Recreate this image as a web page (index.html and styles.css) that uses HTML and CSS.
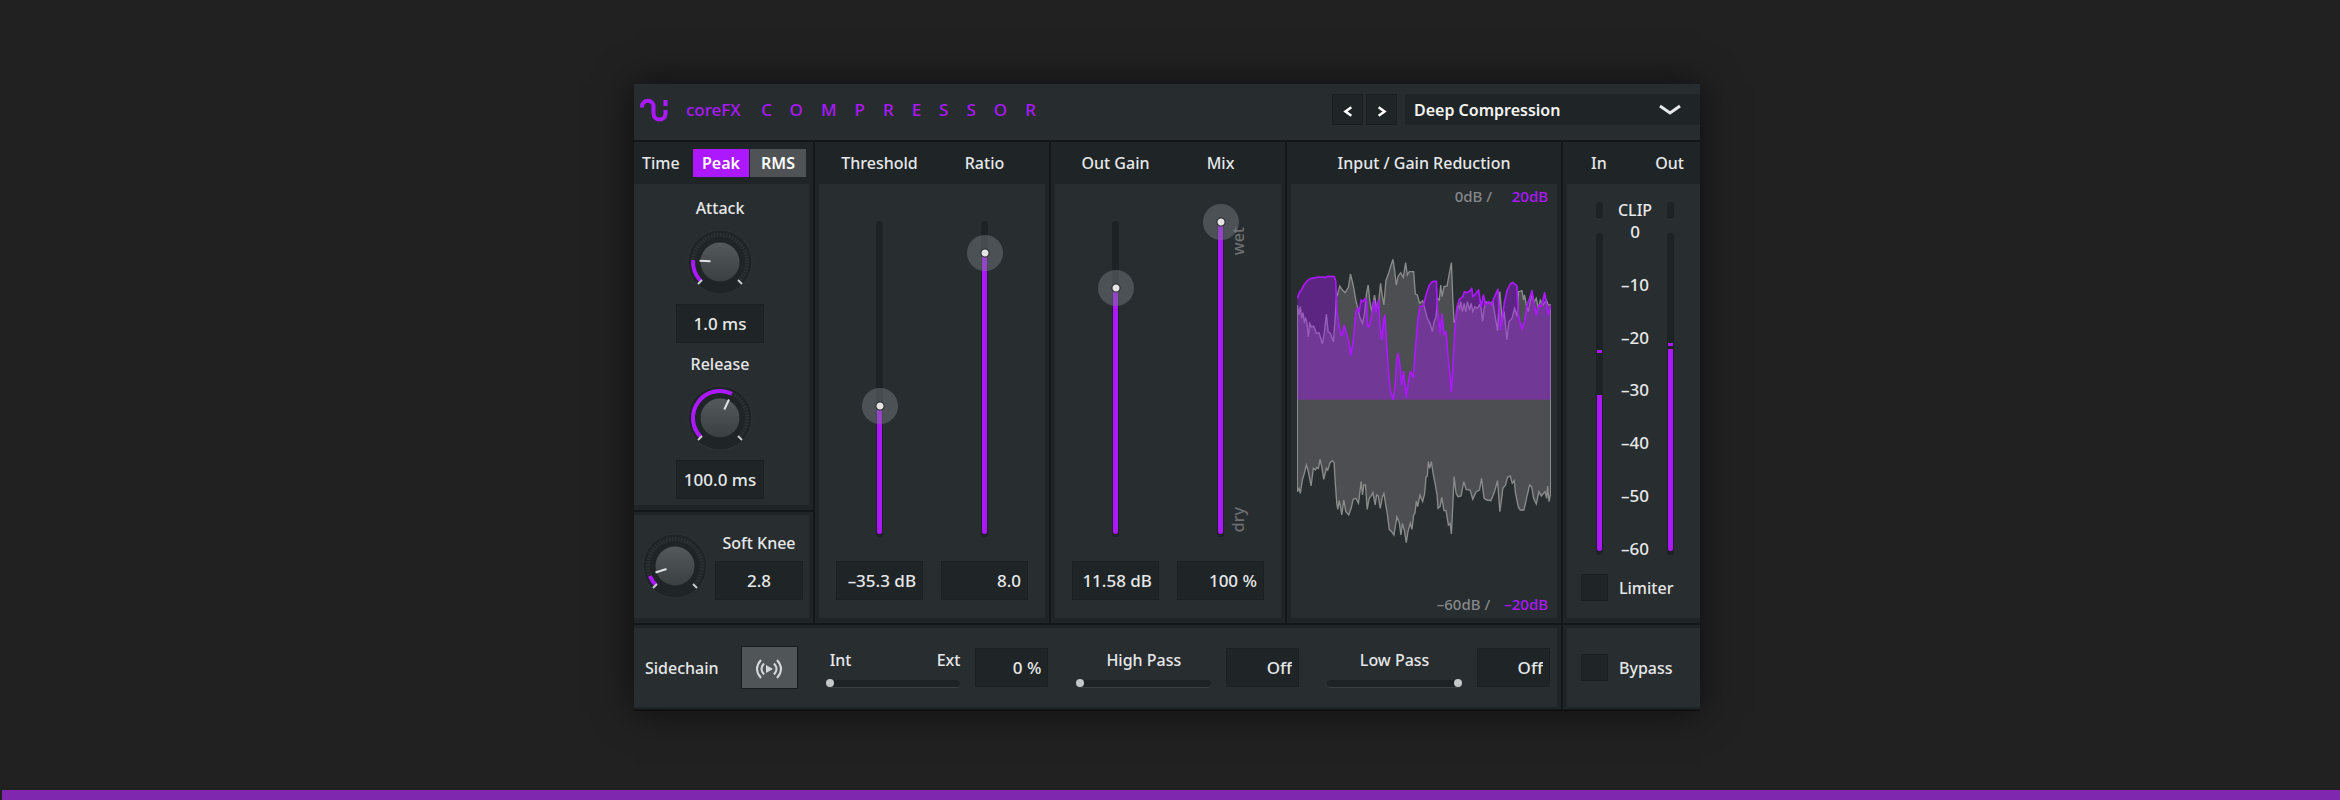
FILE: index.html
```html
<!DOCTYPE html>
<html lang="en">
<head>
    <meta charset="UTF-8">
    <meta name="viewport" content="width=device-width, initial-scale=1.0">
    <title>coreFX Compressor</title>
    <link rel="stylesheet" href="styles.css">
</head>
<body>
    <main class="stage">
        <div class="plugin">
            <header class="header">
                <svg class="logo" viewBox="0 0 28 24" fill="none" stroke="currentColor" stroke-width="4">
                    <path d="M2 9.500V8.500a5.500 5.500 0 0 1 11.500 0V15.500a6 6 0 0 0 12 0V12"/>
                    <path d="M25.500 2v6"/>
                </svg>
                <h1 class="brand">coreFX <span class="brand-name">COMPRESSOR</span></h1>
                <div class="presets">
                    <button class="step" aria-label="Previous preset">
                        <svg viewBox="0 0 12 14" fill="none" stroke="currentColor" stroke-width="3"><path d="M10 2L3 7l7 5"/></svg>
                    </button>
                    <button class="step" aria-label="Next preset">
                        <svg viewBox="0 0 12 14" fill="none" stroke="currentColor" stroke-width="3"><path d="M2 2l7 5-7 5"/></svg>
                    </button>
                    <div class="preset">
                        <select aria-label="Preset">
                            <option>Deep Compression</option>
                        </select>
                        <svg viewBox="0 0 24 12" fill="none" stroke="currentColor" stroke-width="3"><path d="M2 2l10 7 10-7"/></svg>
                    </div>
                </div>
            </header>

            <div class="panels">
                <div class="column">
                    <section class="panel panel-time">
                        <div class="title title-time">
                            <span>Time</span>
                            <div class="toggle">
                                <button class="active" aria-pressed="true">Peak</button>
                                <button aria-pressed="false">RMS</button>
                            </div>
                        </div>
                        <div class="body body-time">
                            <label for="attack">Attack</label>
                            <svg class="knob" viewBox="-33 -33 66 66">
                                <circle class="knob-base" r="32"/>
                                <path class="knob-ring" d="M-19.100 19.100A27 27 0 1 1 19.100 19.100"/>
                                <path class="knob-value" d="M-19.100 19.100A27 27 0 0 1 -26.900 -2"/>
                                <circle class="knob-cap" r="19.500"/>
                                <path class="knob-mark" d="M-22 22l4-4M22 22l-4-4"/>
                                <path class="knob-pointer" d="M-20.500 -1.300L-9.500 -.700"/>
                            </svg>
                            <input class="value" id="attack" type="text" value="1.0 ms">
                            <label for="release">Release</label>
                            <svg class="knob" viewBox="-33 -33 66 66">
                                <circle class="knob-base" r="32"/>
                                <path class="knob-ring" d="M-19.100 19.100A27 27 0 1 1 19.100 19.100"/>
                                <path class="knob-value" d="M-19.100 19.100A27 27 0 0 1 11.800 -24.300"/>
                                <circle class="knob-cap" r="19.500"/>
                                <path class="knob-mark" d="M-22 22l4-4M22 22l-4-4"/>
                                <path class="knob-pointer" d="M9 -18.500L4.300 -8.500"/>
                            </svg>
                            <input class="value" id="release" type="text" value="100.0 ms">
                        </div>
                    </section>
                    <section class="panel panel-knee">
                        <div class="body body-knee">
                            <svg class="knob" viewBox="-33 -33 66 66">
                                <circle class="knob-base" r="32"/>
                                <path class="knob-ring" d="M-19.100 19.100A27 27 0 1 1 19.100 19.100"/>
                                <path class="knob-value" d="M-19.100 19.100A27 27 0 0 1 -25.100 10"/>
                                <circle class="knob-cap" r="19.500"/>
                                <path class="knob-mark" d="M-22 22l4-4M22 22l-4-4"/>
                                <path class="knob-pointer" d="M-19.500 6.500L-8.500 3"/>
                            </svg>
                            <div class="knee">
                                <label for="knee">Soft Knee</label>
                                <input class="value" id="knee" type="text" value="2.8">
                            </div>
                        </div>
                    </section>
                </div>

                <section class="panel">
                    <div class="title title-pair"><label for="threshold">Threshold</label><label for="ratio">Ratio</label></div>
                    <div class="body body-faders">
                        <div class="fader" style="--v: 0.414"><input id="threshold" type="range" min="0" max="1" step="0.001" value="0.414"></div>
                        <div class="fader" style="--v: 0.9"><input id="ratio" type="range" min="0" max="1" step="0.001" value="0.9"></div>
                        <input class="value right" type="text" value="&#8211;35.3 dB" aria-label="Threshold value">
                        <input class="value right" type="text" value="8.0" aria-label="Ratio value">
                    </div>
                </section>

                <section class="panel">
                    <div class="title title-pair"><label for="gain">Out Gain</label><label for="mix">Mix</label></div>
                    <div class="body body-faders">
                        <div class="fader" style="--v: 0.789"><input id="gain" type="range" min="0" max="1" step="0.001" value="0.789"></div>
                        <div class="fader" style="--v: 1">
                            <input id="mix" type="range" min="0" max="1" step="0.001" value="1">
                            <span class="wet">wet</span>
                            <span class="dry">dry</span>
                        </div>
                        <input class="value right" type="text" value="11.58 dB" aria-label="Out gain value">
                        <input class="value right" type="text" value="100 %" aria-label="Mix value">
                    </div>
                </section>

                <section class="panel">
                    <div class="title">Input / Gain Reduction</div>
                    <div class="body body-graph">
                        <div class="range"><span>0dB /</span><span class="accent">20dB</span></div>
                        <svg class="graph" viewBox="54 0 760 960" preserveAspectRatio="none">
                            <!-- input level -->
                            <path class="input-area" d="M55 195L60 225 64 200 68 235 72 218 76 245 80 235 84 250 88 290 92 250 98 262 104 258 112 280 120 278 130 312 136 275 142 222 147 275 154 280 163 305 168 235 172 170 175 165 182 138 190 150 198 158 208 142 214 102 222 135 230 180 236 205 243 235 250 250 256 220 262 160 267 135 272 185 278 215 286 165 292 205 298 190 304 130 308 160 314 195 320 122 328 100 334 80 341 58 346 90 351 135 356 110 364 98 372 112 379 68 384 105 390 95 403 95 408 162 414 165 421 190 430 182 436 205 444 235 452 250 459 275 464 245 470 230 475 175 480 180 484 135 488 170 494 140 503 138 508 110 516 68 520 170 524 248 530 235 535 190 540 205 544 185 549 215 554 190 559 215 564 185 570 210 575 190 580 215 586 200 594 205 600 195 605 205 609 245 614 205 620 185 628 190 640 185 647 230 654 272 661 155 668 245 674 215 682 300 688 245 697 235 705 205 713 230 717 155 727 152 732 180 735 165 740 195 746 215 751 190 757 165 764 185 770 175 776 205 782 180 790 195 800 180 806 195 813 195V760L808 785 804 738 801 775 796 755 785 768 778 755 770 792 762 775 756 740 750 735 742 770 733 810 722 810 716 800 708 760 704 722 698 730 692 708 684 712 678 735 670 745 667 770 661 815 654 722 645 755 634 782 622 780 614 775 606 715 600 750 590 755 580 778 572 750 560 748 553 725 545 768 536 770 530 760 524 710 520 800 516 882 512 850 507 855 500 812 494 812 487 772 482 800 476 805 473 765 468 735 462 705 456 665 451 685 447 665 444 708 440 712 436 760 430 785 422 765 415 800 411 783 407 820 403 825 398 868 393 850 386 875 381 908 375 870 369 850 365 885 360 848 353 830 344 885 337 875 330 868 324 820 318 785 314 760 309 772 303 805 297 768 292 765 288 795 281 758 276 768 270 775 264 808 259 735 254 735 250 765 246 725 238 790 230 775 222 778 216 805 209 825 200 815 194 780 188 825 184 800 180 782 176 808 173 790 168 720 165 668 160 662 153 668 146 690 142 685 134 718 128 680 123 658 118 685 113 682 109 690 103 685 96 738 88 695 82 675 76 700 70 720 64 760 60 745 55 755Z"/>
                            <!-- gain reduction -->
                            <path class="reduction-area" d="M55 479V175L60 160 67 150 75 135 85 122 97 115 120 111 140 112 147 109 166 110 170 125 173 210 180 260 186 285 190 285 195 255 202 280 208 300 215 345 222 305 230 215 236 205 240 215 246 180 252 185 258 175 262 185 265 258 270 260 278 225 284 182 290 215 298 180 303 270 308 298 313 240 317 225 322 310 328 400 334 455 342 478 348 430 352 360 356 340 362 375 367 435 373 395 381 470 386 435 393 395 402 412 408 330 416 235 422 200 432 198 440 165 450 135 460 124 471 124 474 205 482 278 488 222 494 285 500 275 506 350 512 410 516 455 520 390 526 270 532 205 540 178 550 170 555 155 562 158 572 152 577 145 580 170 586 165 597 150 605 200 612 165 618 195 628 185 636 195 643 175 655 148 660 225 663 268 668 235 675 185 683 150 692 132 699 127 712 137 716 225 727 268 735 245 742 195 750 175 757 152 764 195 770 225 778 195 784 200 790 180 795 158 800 190 806 225 813 195V479Z"/>
                            <path class="reduction-line" d="M55 175L60 160 67 150 75 135 85 122 97 115 120 111 140 112 147 109 166 110 170 125 173 210 180 260 186 285 190 285 195 255 202 280 208 300 215 345 222 305 230 215 236 205 240 215 246 180 252 185 258 175 262 185 265 258 270 260 278 225 284 182 290 215 298 180 303 270 308 298 313 240 317 225 322 310 328 400 334 455 342 478 348 430 352 360 356 340 362 375 367 435 373 395 381 470 386 435 393 395 402 412 408 330 416 235 422 200 432 198 440 165 450 135 460 124 471 124 474 205 482 278 488 222 494 285 500 275 506 350 512 410 516 455 520 390 526 270 532 205 540 178 550 170 555 155 562 158 572 152 577 145 580 170 586 165 597 150 605 200 612 165 618 195 628 185 636 195 643 175 655 148 660 225 663 268 668 235 675 185 683 150 692 132 699 127 712 137 716 225 727 268 735 245 742 195 750 175 757 152 764 195 770 225 778 195 784 200 790 180 795 158 800 190 806 225 813 195"/>
                        </svg>
                        <div class="range"><span>&#8211;60dB /</span><span class="accent">&#8211;20dB</span></div>
                    </div>
                </section>

                <section class="panel panel-last">
                    <div class="title title-meters"><span>In</span><span>Out</span></div>
                    <div class="body body-meters">
                        <div class="meters">
                            <div class="meter">
                                <i class="clip"></i>
                                <div class="bar"><i class="peak"></i><i class="level" style="height: 156px"></i></div>
                            </div>
                            <div class="scale">
                                <span>CLIP</span>
                                <ol>
                                    <li>0</li>
                                    <li>&#8211;10</li>
                                    <li>&#8211;20</li>
                                    <li>&#8211;30</li>
                                    <li>&#8211;40</li>
                                    <li>&#8211;50</li>
                                    <li>&#8211;60</li>
                                </ol>
                            </div>
                            <div class="meter">
                                <i class="clip"></i>
                                <div class="bar bar-out"><i class="peak"></i><i class="level" style="height: 202px"></i></div>
                            </div>
                        </div>
                        <label class="check"><input type="checkbox">Limiter</label>
                    </div>
                </section>
            </div>

            <div class="bottom">
                <section class="panel panel-side">
                    <div class="body body-side">
                        <span>Sidechain</span>
                        <button class="listen" aria-label="Listen to sidechain">
                            <svg viewBox="0 0 28 20" fill="none" stroke="currentColor" stroke-width="2">
                                <path d="M6 1Q-2 10 6 19M22 1Q30 10 22 19"/>
                                <path d="M9 4.500Q4 10 9 15.500M19 4.500Q24 10 19 15.500"/>
                                <path d="M11 6v8l7-4z" fill="currentColor" stroke="none"/>
                            </svg>
                        </button>
                        <div class="filters">
                            <div class="filter">
                                <div class="filter-main">
                                    <label class="ends" for="source"><span>Int</span><span>Ext</span></label>
                                    <input class="line" id="source" type="range" value="0">
                                </div>
                                <input class="value right" type="text" value="0 %" aria-label="Sidechain amount">
                            </div>
                            <div class="filter">
                                <div class="filter-main">
                                    <label for="highpass">High Pass</label>
                                    <input class="line" id="highpass" type="range" value="0">
                                </div>
                                <input class="value right" type="text" value="Off" aria-label="High pass value">
                            </div>
                            <div class="filter">
                                <div class="filter-main">
                                    <label for="lowpass">Low Pass</label>
                                    <input class="line" id="lowpass" type="range" value="100">
                                </div>
                                <input class="value right" type="text" value="Off" aria-label="Low pass value">
                            </div>
                        </div>
                    </div>
                </section>
                <section class="panel panel-last panel-bypass">
                    <div class="body body-bypass">
                        <label class="check"><input type="checkbox">Bypass</label>
                    </div>
                </section>
            </div>
        </div>
    </main>
    <svg width="0" height="0" aria-hidden="true">
        <linearGradient id="cap" x2="0" y2="1">
            <stop offset="0" stop-color="#54595c"/>
            <stop offset="1" stop-color="#3a3f42"/>
        </linearGradient>
    </svg>
    <footer class="footer"></footer>
</body>
</html>
```
FILE: styles.css
```css
:root {
    --accent: #ac18ff;
    --strip: #1f2427;
    --body: #282d30;
    --edge: #13171a;
    --text: #e6e8e9;
}
* {
    box-sizing: border-box;
}
body {
    margin: 0;
    min-height: 100vh;
    display: flex;
    flex-direction: column;
    background: #212121;
    color: var(--text);
    font-family: "Noto Sans", "Open Sans", sans-serif;
    font-size: 16px;
    font-weight: 500;
    line-height: 24px;
}
button, input, select {
    font: inherit;
    color: inherit;
    margin: 0;
    border: none;
    border-radius: 0;
}
button {
    padding: 0;
    cursor: pointer;
}
.stage {
    padding: 84px 6px 40px 0;
}
.plugin {
    max-width: 1066px;
    margin: 0 auto;
    background: var(--strip);
    border-bottom: 1px solid #0c0f10;
    box-shadow: 0 0 36px rgba(0, 0, 0, 0.6);
}
.header {
    display: flex;
    align-items: center;
    min-height: 58px;
    padding-bottom: 5px;
    background: #272c2f;
    border-bottom: 2px solid var(--edge);
}
.logo {
    width: 28px;
    height: 24px;
    margin-left: 6px;
    color: var(--accent);
}
.brand {
    margin: 0 0 0 18px;
    font-size: 17px;
    font-weight: 500;
    color: var(--accent);
}
.brand-name {
    margin-left: 16px;
    letter-spacing: 18px;
}
.presets {
    display: flex;
    gap: 3px;
    margin-left: auto;
}
.step {
    width: 31px;
    height: 31px;
    background: var(--strip);
    box-shadow: inset 0 0 0 1px #1a1e21;
    color: #fff;
}
.step svg {
    width: 10px;
    height: 13px;
    vertical-align: middle;
}
.preset {
    display: grid;
    align-items: center;
    width: 295px;
    margin-left: 5px;
}
.preset select, .preset svg {
    grid-area: 1 / 1;
}
.preset select {
    appearance: none;
    height: 31px;
    padding: 0 36px 0 9px;
    background: var(--strip);
    border-radius: 3px;
    color: #f4f4f4;
    font-weight: 600;
}
.preset svg {
    width: 24px;
    height: 12px;
    justify-self: end;
    margin-right: 18px;
    pointer-events: none;
}
.panels {
    display: grid;
    grid-template-columns: 181fr 236fr 236fr 276fr 137fr;
}
.bottom {
    display: grid;
    grid-template-columns: 929fr 137fr;
}
.column, .panel {
    display: flex;
    flex-direction: column;
}
.panel {
    padding: 0 4px 5px;
    border-right: 2px solid var(--edge);
    border-bottom: 2px solid var(--edge);
}
.panel-time, .panel-side, .panel-knee {
    padding-left: 0;
}
.panel-time {
    flex: 1;
}
.panel-knee, .panel-side, .panel-bypass {
    padding-top: 3px;
}
.panel-side, .panel-bypass {
    padding-bottom: 2px;
    border-bottom-width: 1px;
}
.panel-last {
    padding-right: 0;
    border-right: none;
}
.title {
    display: flex;
    align-items: center;
    justify-content: center;
    height: 42px;
}
.title-time {
    justify-content: space-between;
    padding-left: 8px;
    padding-right: 3px;
}
.toggle {
    display: flex;
    gap: 1px;
}
.toggle button {
    width: 56px;
    height: 28px;
    background: #4f5356;
    color: #fff;
    font-weight: 600;
}
.toggle .active {
    background: var(--accent);
}
.title-pair {
    display: grid;
    grid-template-columns: 1fr 1fr;
    gap: 18px;
    padding-left: 17px;
    padding-right: 17px;
    text-align: center;
}
.title-meters {
    justify-content: space-between;
    padding-left: 24px;
    padding-right: 16px;
}
.body {
    flex: 1;
    background: var(--body);
}
.value {
    width: 88px;
    height: 39px;
    padding: 0 7px;
    background: var(--strip);
    box-shadow: inset 0 0 0 1px #1b2023;
    font-size: 17px;
    text-align: center;
}
.right {
    text-align: right;
}

/* knobs */
.body-time {
    display: flex;
    flex-direction: column;
    align-items: center;
    gap: 9px;
    padding: 12px 3px 5px 0;
}
.body-knee {
    display: flex;
    align-items: center;
    justify-content: space-between;
    padding: 16px 6px 18px 8px;
}
.knee {
    display: flex;
    flex-direction: column;
    align-items: center;
    gap: 6px;
}
.knob {
    width: 66px;
    height: 66px;
}
.knob-base {
    fill: #1f2427;
    stroke: #2e3336;
}
.knob-ring, .knob-value {
    fill: none;
    stroke-width: 4;
}
.knob-ring {
    stroke: #2b3033;
    stroke-dasharray: 2 1;
}
.knob-value {
    stroke: var(--accent);
}
.knob-cap {
    fill: url(#cap);
}
.knob-mark {
    stroke: #c8cbcc;
    stroke-width: 2;
}
.knob-pointer {
    stroke: #e0e2e3;
    stroke-width: 2;
}

/* faders: track, fill and handle share one grid cell */
.body-faders {
    display: grid;
    grid-template-columns: 1fr 1fr;
    gap: 7px 18px;
    padding: 20px 17px 18px;
}
.body-faders .value {
    width: 100%;
}
.fader {
    display: grid;
    justify-items: center;
    height: 350px;
}
.fader::before, .fader::after, .fader input, .fader span {
    grid-area: 1 / 1;
}
.fader::before, .fader::after {
    content: "";
    border-radius: 4px;
}
.fader::before {
    width: 7px;
    margin: 17px 0;
    background: #1d2225;
}
.fader::after {
    align-self: end;
    width: 5px;
    height: calc(var(--v) * 314px);
    margin-bottom: 20px;
    background: var(--accent);
}
.fader input {
    appearance: none;
    writing-mode: vertical-lr;
    direction: rtl;
    width: 36px;
    height: 350px;
    background: none;
    z-index: 1;
}
.fader input::-webkit-slider-thumb {
    appearance: none;
    width: 36px;
    height: 36px;
    border-radius: 50%;
    background: radial-gradient(circle, #e4e4e4 3px, #24282b 4px, rgba(120, 125, 132, 0.45) 5px);
}
.fader span {
    writing-mode: vertical-rl;
    transform: rotate(180deg);
    margin-left: 34px;
    color: #6c7072;
}
.wet {
    align-self: start;
    margin-top: 23px;
}
.dry {
    align-self: end;
    margin-bottom: 22px;
}

/* graph */
.body-graph {
    display: flex;
    flex-direction: column;
    padding: 2px 6px 4px;
    font-size: 15px;
}
.range {
    display: flex;
    justify-content: flex-end;
    gap: 14px;
    padding-right: 3px;
    line-height: 20px;
    color: #85888a;
}
.accent {
    min-width: 42px;
    text-align: right;
    color: var(--accent);
}
.graph {
    width: 100%;
    height: 320px;
    margin: auto 0;
}
.input-area {
    fill: #4c4e51;
    stroke: #8a8c8c;
    stroke-width: 4;
}
.reduction-area {
    fill: var(--accent);
    fill-opacity: 0.4;
}
.reduction-line {
    fill: none;
    stroke: var(--accent);
    stroke-width: 5;
    stroke-linejoin: round;
}

/* meters */
.body-meters {
    display: flex;
    flex-direction: column;
    gap: 13px;
    padding: 14px 14px 17px;
}
.meters {
    flex: 1;
    display: flex;
    justify-content: space-between;
    padding: 0 12px 0 15px;
}
.meter {
    display: flex;
    flex-direction: column;
    gap: 13px;
    padding: 4px 0 6px;
}
.clip {
    width: 7px;
    height: 18px;
    border-radius: 4px;
    background: #1d2225;
    border-bottom: 1px solid #33383a;
}
.bar {
    flex: 1;
    display: flex;
    flex-direction: column;
    align-items: center;
    width: 7px;
    padding-bottom: 4px;
    border-radius: 4px;
    background: #1d2225;
}
.peak {
    width: 5px;
    height: 3px;
    margin: auto 0 42px;
    background: var(--accent);
}
.bar-out .peak {
    margin-bottom: 3px;
}
.level {
    width: 5px;
    border-radius: 0 0 3px 3px;
    background: var(--accent);
}
.scale {
    display: flex;
    flex-direction: column;
    text-align: center;
}
.scale ol {
    flex: 1;
    display: flex;
    flex-direction: column;
    justify-content: space-between;
    margin: -2px 0 0;
    padding: 0;
    list-style: none;
    font-size: 17px;
}
.check {
    display: flex;
    align-items: center;
    gap: 11px;
}
.check input {
    appearance: none;
    width: 27px;
    height: 27px;
    background: var(--strip);
    box-shadow: inset 0 0 0 1px #1b2023;
}

/* bottom row */
.body-side {
    display: flex;
    align-items: center;
    gap: 22px;
    padding: 0 7px 0 11px;
    min-height: 79px;
}
.listen {
    width: 57px;
    height: 43px;
    background: #505558;
    border: 1px solid #181c1e;
    color: #d5d7d8;
}
.listen svg {
    width: 28px;
    height: 20px;
    vertical-align: middle;
}
.filters {
    flex: 1;
    display: flex;
    gap: 28px;
    margin-left: 6px;
}
.filter {
    flex: 1;
    display: flex;
    align-items: center;
    gap: 15px;
}
.filter .value {
    width: 73px;
}
.filter-main {
    flex: 1;
    display: flex;
    flex-direction: column;
    gap: 8px;
    text-align: center;
}
.ends {
    display: flex;
    justify-content: space-between;
    padding-left: 4px;
}
.line {
    appearance: none;
    width: 100%;
    height: 8px;
    border-radius: 4px;
    background: #1d2225;
    border-bottom: 1px solid #3a3f42;
}
.line::-webkit-slider-thumb {
    appearance: none;
    width: 8px;
    height: 8px;
    border-radius: 50%;
    background: #c4c6c8;
}
.body-bypass {
    display: flex;
    align-items: center;
    padding: 0 14px;
}
.footer {
    height: 10px;
    margin: auto 0 0 2px;
    background: #7f27ae;
}
```
